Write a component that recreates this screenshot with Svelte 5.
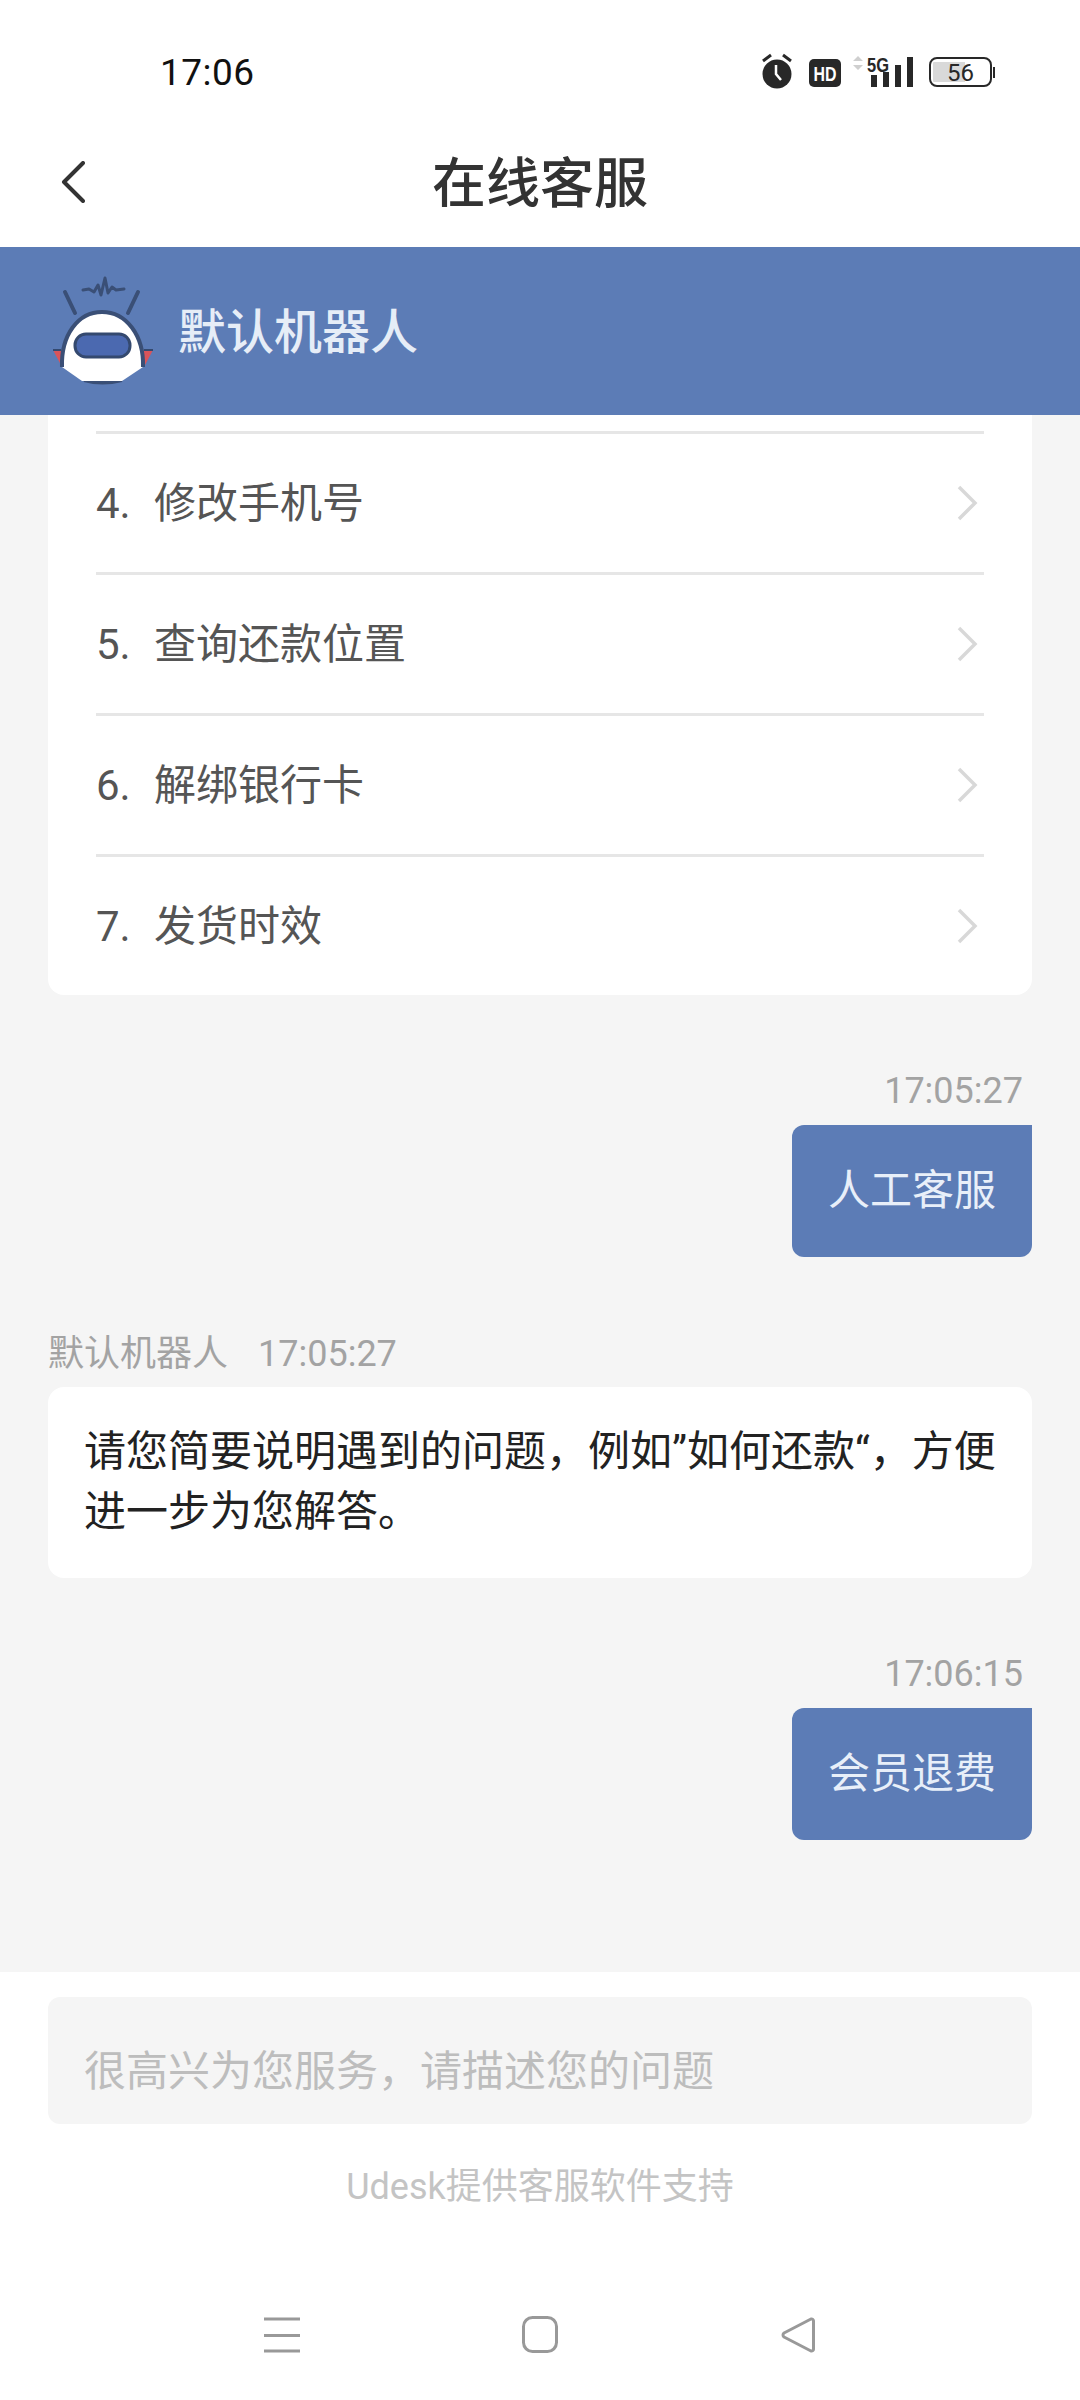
<script>
  const rows = [
    ['4.', '修改手机号'],
    ['5.', '查询还款位置'],
    ['6.', '解绑银行卡'],
    ['7.', '发货时效']
  ];
</script>

<div class="page">
  <header class="top">
    <div class="status">
      <span class="clock">17:06</span>
      <svg class="status-icons" width="250" height="44" viewBox="750 50 250 44" aria-hidden="true">
        <circle cx="777" cy="74" r="14.5" fill="#282828"/>
        <path d="M763 61l8-6M791 61l-8-6" stroke="#282828" stroke-width="3" fill="none"/>
        <path d="M776 65v9l5 6" stroke="#fff" stroke-width="2.5" fill="none"/>
        <rect x="809" y="59" width="32" height="28" rx="5" fill="#282828"/>
        <text x="813.5" y="80.500" class="hd" textLength="23" lengthAdjust="spacingAndGlyphs">HD</text>
        <path d="M853 61l5-5 5 5zM853 65h10l-5 5z" fill="#cfcfcf"/>
        <text x="867" y="71.500" class="fiveg" textLength="22" lengthAdjust="spacingAndGlyphs">5G</text>
        <path d="M871 75h6v12h-6zM883 72h6v15h-6zM895 65h6v22h-6zM907 57h6v30h-6z" fill="#282828"/>
        <rect x="930" y="58" width="61" height="28" rx="7" fill="#fff" stroke="#282828" stroke-width="2"/>
        <path d="M934 62h31v20h-31a1 1 0 0 1-1-1v-18a1 1 0 0 1 1-1z" fill="#d9d9d9"/>
        <rect x="993" y="67" width="2" height="11" fill="#282828"/>
        <text x="960.5" y="81" class="batt">56</text>
      </svg>
    </div>
    <div class="nav">
      <svg class="back" width="24" height="42" viewBox="0 0 24 42" aria-hidden="true">
        <path d="M22 2L3 21l19 19" fill="none" stroke="#333" stroke-width="4" stroke-linecap="round" stroke-linejoin="round"/>
      </svg>
      <h1>在线客服</h1>
    </div>
  </header>

  <section class="banner">
    <svg class="robot" width="106" height="112" viewBox="50 275 106 112" aria-hidden="true">
      <path d="M53 350h9l-1 15zM153 350h-10l2 15z" fill="#d9545a"/>
      <path d="M53 350h8M153 350h-9" stroke="#34496f" stroke-width="2"/>
      <path d="M65 292l10 21M138 292l-10 21" stroke="#3a4f76" stroke-width="4" stroke-linecap="round"/>
      <path d="M83 290l6-1 5 3 4-7 3 10 4-17 3 15 4-6 4 3 8-1" fill="none" stroke="#3a4f76" stroke-width="3" stroke-linecap="round" stroke-linejoin="round"/>
      <path d="M84 381q18 5 38 0z" fill="#3a4f76" stroke="#3a4f76" stroke-width="2"/>
      <path d="M62 367c-1-32 16-55 40-55s42 23 41 55l-21 14H82z" fill="#fff"/>
      <path d="M62 367c-1-32 16-55 40-55s42 23 41 55" fill="none" stroke="#3a4f76" stroke-width="4"/>
      <rect x="75" y="334" width="55" height="23" rx="11" fill="#4b69b0" stroke="#34496f" stroke-width="3"/>
    </svg>
    <span class="bot-name">默认机器人</span>
  </section>

  <main class="chat">
    <div class="card list">
      <div class="stub"></div>
      {#each rows as [num, label]}
        <div class="row">
          <span class="num">{num}</span>
          <span class="label">{label}</span>
          <svg class="chev" width="22" height="36" viewBox="0 0 22 36" aria-hidden="true">
            <path d="M3 2l16 16L3 34" fill="none" stroke="#d8d8d8" stroke-width="3.500"/>
          </svg>
        </div>
      {/each}
    </div>

    <div class="out first">
      <time>17:05:27</time>
      <div class="bubble">人工客服</div>
    </div>

    <div class="in">
      <div class="meta"><span>默认机器人</span><time>17:05:27</time></div>
      <div class="card reply">请您简要说明遇到的问题，例如”如何还款“，方便进一步为您解答。</div>
    </div>

    <div class="out second">
      <time>17:06:15</time>
      <div class="bubble">会员退费</div>
    </div>
  </main>

  <footer class="composer">
    <div class="input">很高兴为您服务，请描述您的问题</div>
    <p class="credit">Udesk提供客服软件支持</p>
    <div class="sysnav">
      <svg width="36" height="36" viewBox="0 0 36 36" aria-hidden="true">
        <path d="M0 2h36M0 18.500h36M0 34h36" stroke="#999" stroke-width="3"/>
      </svg>
      <svg width="36" height="37" viewBox="0 0 36 37" aria-hidden="true">
        <rect x="1.500" y="1.500" width="33" height="34" rx="9" fill="none" stroke="#999" stroke-width="3"/>
      </svg>
      <svg width="34" height="36" viewBox="0 0 34 36" aria-hidden="true">
        <path d="M30 2L3 16a2.500 2.500 0 0 0 0 4l27 14a2 2 0 0 0 2.500-2V4A2 2 0 0 0 30 2z" fill="none" stroke="#999" stroke-width="3" stroke-linejoin="round"/>
      </svg>
    </div>
  </footer>
</div>

<style>
  :global(body) {
    margin: 0;
    background: #f5f5f5;
  }
  .page {
    width: 1080px;
    height: 2400px;
    display: flex;
    flex-direction: column;
    overflow: hidden;
    font-family: Roboto, "Noto Sans CJK SC", sans-serif;
    background: #f5f5f5;
  }
  .top {
    height: 247px;
    flex: none;
    background: #fff;
    display: flex;
    flex-direction: column;
  }
  .status {
    height: 130px;
    flex: none;
    display: flex;
    justify-content: space-between;
    align-items: flex-start;
    padding: 50px 80px 0 160px;
    box-sizing: border-box;
  }
  .clock {
    margin-top: 1px;
    font-size: 37px;
    font-weight: 400;
    letter-spacing: 0.5px;
    line-height: 44px;
    color: #111;
  }
  .status-icons {
    display: block;
  }
  .hd {
    font: 700 21px "Liberation Sans", sans-serif;
    fill: #fff;
  }
  .fiveg {
    font: 700 20px "Liberation Sans", sans-serif;
    fill: #282828;
  }
  .batt {
    font: 400 24px Roboto, sans-serif;
    fill: #282828;
    text-anchor: middle;
  }
  .nav {
    position: relative;
    flex: 1;
    display: flex;
    align-items: flex-start;
    justify-content: center;
  }
  .back {
    position: absolute;
    left: 61px;
    top: 31px;
  }
  h1 {
    margin: 23px 0 0;
    font-size: 54px;
    line-height: 64px;
    font-weight: 500;
    color: #333;
  }
  .banner {
    height: 168px;
    flex: none;
    background: #5c7cb6;
    display: flex;
    align-items: center;
    padding-left: 50px;
    box-sizing: border-box;
  }
  .robot {
    display: block;
    margin-top: -1px;
  }
  .bot-name {
    margin-left: 22px;
    margin-top: 3px;
    font-size: 48px;
    line-height: 60px;
    font-weight: 500;
    color: #e6edf7;
  }
  .chat {
    flex: 1;
    min-height: 0;
    padding: 0 48px;
    display: flex;
    flex-direction: column;
  }
  .card {
    background: #fff;
    border-radius: 16px;
  }
  .list {
    border-radius: 0 0 16px 16px;
    padding: 0 48px;
  }
  .stub {
    height: 16px;
    border-bottom: 3px solid #e6e6e6;
  }
  .row {
    height: 138px;
    display: flex;
    align-items: center;
    border-bottom: 3px solid #e6e6e6;
    font-size: 42px;
    color: #555;
  }
  .row:last-child {
    border-bottom: 0;
    height: 138px;
  }
  .num {
    width: 58px;
    flex: none;
  }
  .label {
    flex: 1;
    padding-bottom: 7px;
  }
  .chev {
    margin-right: 6px;
  }
  time {
    font-size: 36px;
    line-height: 44px;
    color: #a3a3a3;
  }
  .out {
    display: flex;
    flex-direction: column;
    align-items: flex-end;
  }
  .out time {
    margin-right: 9px;
    margin-bottom: 12px;
  }
  .first {
    margin-top: 74px;
  }
  .second {
    margin-top: 74px;
  }
  .bubble {
    width: 240px;
    height: 132px;
    box-sizing: border-box;
    padding-bottom: 10px;
    background: #5c7cb6;
    border-radius: 12px 0 12px 12px;
    display: flex;
    align-items: center;
    justify-content: center;
    font-size: 42px;
    color: #e8eff9;
  }
  .in {
    margin-top: 75px;
  }
  .meta {
    display: flex;
    gap: 30px;
    font-size: 36px;
    line-height: 44px;
    color: #a3a3a3;
    margin-bottom: 11px;
  }
  .reply {
    padding: 35px 36px 36px;
    font-size: 42px;
    line-height: 60px;
    color: #222;
  }
  .composer {
    flex: none;
    height: 428px;
    background: #fff;
    padding-top: 25px;
    box-sizing: border-box;
    display: flex;
    flex-direction: column;
    align-items: center;
  }
  .input {
    width: 984px;
    height: 127px;
    box-sizing: border-box;
    background: #f5f5f5;
    border-radius: 12px;
    padding: 14px 0 0 36px;
    display: flex;
    align-items: center;
    font-size: 42px;
    color: #bdbdbd;
  }
  .credit {
    margin: 41px 0 0;
    font-size: 36px;
    line-height: 44px;
    color: #c4c4c4;
  }
  .sysnav {
    width: 551px;
    margin: 107px 0 0 -2px;
    display: flex;
    justify-content: space-between;
    align-items: center;
  }
  .sysnav svg {
    display: block;
  }
</style>
